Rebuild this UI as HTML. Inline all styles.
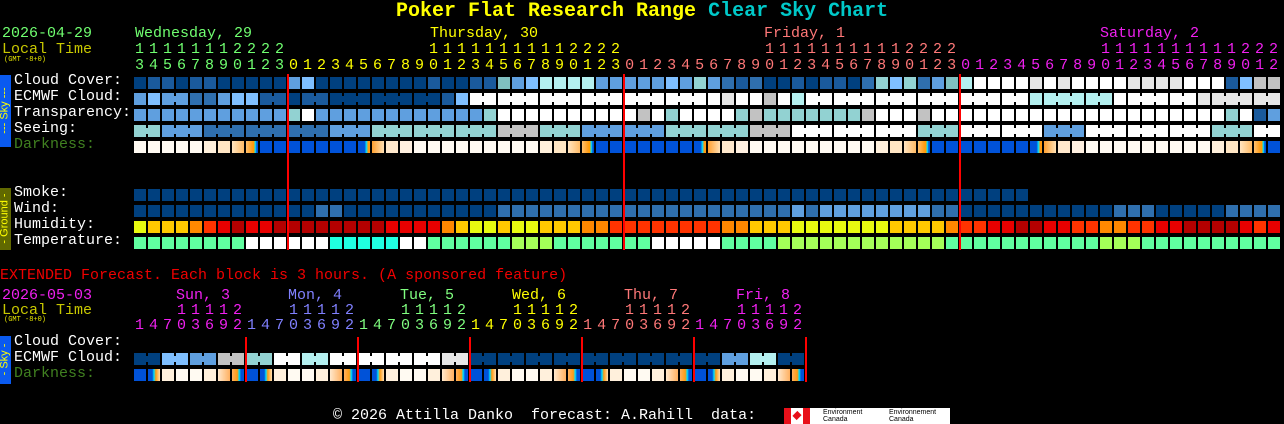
<!DOCTYPE html>
<html><head><meta charset="utf-8">
<style>
html,body{margin:0;padding:0;background:#000;}
body{width:1284px;height:424px;overflow:hidden;position:relative;font-family:"Liberation Mono",monospace;font-size:15px;line-height:15px;color:#fff;}
.t{position:absolute;white-space:pre;}
.dg{letter-spacing:5px;}
.b{position:absolute;width:12px;height:12px;}
.br{position:absolute;width:2px;height:6px;}
.red{position:absolute;width:2px;background:#f00;}
.bar{position:absolute;left:0;width:11px;}
.vt{position:absolute;left:-2px;transform:rotate(-90deg);transform-origin:center;font-family:"Liberation Sans",sans-serif;font-size:11px;line-height:11px;color:#ff0;white-space:pre;}
</style></head><body>
<div class="t" style="left:396px;top:2px;font-size:20px;line-height:20px;font-weight:bold;color:#ffff00">Poker Flat Research Range <span style="color:#00c8c8">Clear Sky Chart</span></div>

<div class="t" style="left:2px;top:26px;color:#70ff70">2026-04-29</div>
<div class="t" style="left:2px;top:42px;color:#c8c800">Local Time</div>
<div class="t" style="left:4px;top:57px;font-size:7px;line-height:7px;color:#e8e800">(GMT -8+0)</div>

<div class="t" style="left:135px;top:26px;color:#70ff70">Wednesday, 29</div>
<div class="t" style="left:430px;top:26px;color:#ffff00">Thursday, 30</div>
<div class="t" style="left:764px;top:26px;color:#ff7878">Friday, 1</div>
<div class="t" style="left:1100px;top:26px;color:#f020f0">Saturday, 2</div>

<div class="t dg" style="left:135px;top:42px;color:#70ff70">11111112222</div>
<div class="t dg" style="left:429px;top:42px;color:#ffff00">11111111112222</div>
<div class="t dg" style="left:765px;top:42px;color:#ff7878">11111111112222</div>
<div class="t dg" style="left:1101px;top:42px;color:#f020f0">11111111112222</div>

<div class="t dg" style="left:135px;top:58px"><span style="color:#70ff70">34567890123</span><span style="color:#ffff00">012345678901234567890123</span><span style="color:#ff7878">012345678901234567890123</span><span style="color:#f020f0">01234567890123456789012</span></div>

<div class="t" style="left:14px;top:73px">Cloud Cover:</div>
<div class="t" style="left:14px;top:89px">ECMWF Cloud:</div>
<div class="t" style="left:14px;top:105px">Transparency:</div>
<div class="t" style="left:14px;top:121px">Seeing:</div>
<div class="t" style="left:14px;top:137px;color:#408020">Darkness:</div>

<div class="t" style="left:14px;top:185px">Smoke:</div>
<div class="t" style="left:14px;top:201px">Wind:</div>
<div class="t" style="left:14px;top:217px">Humidity:</div>
<div class="t" style="left:14px;top:233px">Temperature:</div>

<div class="bar" style="top:75px;height:72px;background:#0a5af0"><div class="vt" style="top:30px;width:70px;left:-30px;text-align:center">--- Sky ---</div></div>
<div class="bar" style="top:188px;height:62px;background:#606800"><div class="vt" style="top:25px;width:62px;left:-26px;text-align:center">- Ground -</div></div>
<div class="bar" style="top:336px;height:48px;background:#0a5af0"><div class="vt" style="top:18px;width:48px;left:-19px;text-align:center">- Sky -</div></div>

<div class="t" style="left:0px;top:268px;color:#f00000">EXTENDED Forecast. Each block is 3 hours. (A sponsored feature)</div>
<div class="t" style="left:2px;top:288px;color:#f020f0">2026-05-03</div>
<div class="t" style="left:2px;top:303px;color:#c8c800">Local Time</div>
<div class="t" style="left:4px;top:317px;font-size:7px;line-height:7px;color:#e8e800">(GMT -8+0)</div>

<div class="t" style="left:176px;top:288px;color:#f020f0">Sun, 3</div>
<div class="t" style="left:288px;top:288px;color:#8080ff">Mon, 4</div>
<div class="t" style="left:400px;top:288px;color:#80ff80">Tue, 5</div>
<div class="t" style="left:512px;top:288px;color:#ffff00">Wed, 6</div>
<div class="t" style="left:624px;top:288px;color:#ff7878">Thu, 7</div>
<div class="t" style="left:736px;top:288px;color:#f020f0">Fri, 8</div>

<div class="t dg" style="left:177px;top:303px;color:#f020f0">11112</div>
<div class="t dg" style="left:289px;top:303px;color:#8080ff">11112</div>
<div class="t dg" style="left:401px;top:303px;color:#80ff80">11112</div>
<div class="t dg" style="left:513px;top:303px;color:#ffff00">11112</div>
<div class="t dg" style="left:625px;top:303px;color:#ff7878">11112</div>
<div class="t dg" style="left:737px;top:303px;color:#f020f0">11112</div>
<div class="t dg" style="left:135px;top:318px"><span style="color:#f020f0">14703692</span><span style="color:#8080ff">14703692</span><span style="color:#80ff80">14703692</span><span style="color:#ffff00">14703692</span><span style="color:#ff7878">14703692</span><span style="color:#f020f0">14703692</span></div>

<div class="t" style="left:14px;top:334px">Cloud Cover:</div>
<div class="t" style="left:14px;top:350px">ECMWF Cloud:</div>
<div class="t" style="left:14px;top:366px;color:#408020">Darkness:</div>

<div class="t" style="left:333px;top:408px">© 2026 Attilla Danko  forecast: A.Rahill  data:</div>
<div style="position:absolute;left:784px;top:408px;width:166px;height:16px;background:#fff">
  <div style="position:absolute;left:0;top:0;width:7px;height:16px;background:#e8101a"></div>
  <div style="position:absolute;left:19px;top:0;width:7px;height:16px;background:#e8101a"></div>
  <div style="position:absolute;left:10px;top:4px;width:6px;height:7px;background:#e8101a;transform:rotate(45deg)"></div>
  <div class="t" style="left:39px;top:1px;font-family:'Liberation Sans',sans-serif;font-size:7px;line-height:7px;color:#000">Environment<br>Canada</div>
  <div class="t" style="left:105px;top:1px;font-family:'Liberation Sans',sans-serif;font-size:7px;line-height:7px;color:#000">Environnement<br>Canada</div>
</div>

<div id="g"></div>
<script>
var P={A:'#00407f',B:'#1a5a9c',C:'#2f6fae',E:'#5f9fdf',F:'#7fbfff',G:'#92d2d2',T:'#80c0c0',H:'#b4f0f0',W:'#ffffff',l:'#e6e6e6',g:'#c2c2c2',
y:'#e8fa10',o:'#ffc800',O:'#ff8800',r:'#ff3300',R:'#e80000',X:'#b40000',m:'#60ffa0',L:'#a4ff58',t:'#20ffe0',w:'#ffffff'};
var out='';
function blk(x,y,c){out+='<div class="b" style="left:'+x+'px;top:'+y+'px;background:'+c+'"></div>';}
function brg(x,y,c){out+='<div class="br" style="left:'+x+'px;top:'+(y+3)+'px;background:'+c+'"></div>';}
function row(s,y,p,groups){
 for(var i=0;i<s.length;i++){var c=P[s[i]]||s[i];blk(134+i*14,y,c);
  if(groups&&i+1<s.length&&s[i]==s[i+1]&&((i+1-2)%3!=0)) brg(146+i*14,y,c);}
}
function rep(c,n){return Array(n+1).join(c);}
row("ABBABBAAAAA"+"EF"+"AAAAAAAA"+"BAABBTEFHHHHEEEEEFEGECBCAABABB"+"ACGFGCETHWWWWlWlWWWWllllWWWBFgg",77);
row("EFEECCEFFBB"+"ABBAAAAAAA"+"ABF"+rep("W",18)+"lWWgWHWWW"+rep("W",13)+rep("H",6)+rep("W",6)+rep("l",6),93,0,1);
row(rep("E",11)+"GW"+rep("E",8)+"EEEEG"+rep("W",10)+"gWGWWWWGgGGGGGG"+"GgWWWgWW"+rep("W",19)+"GWBE",109);
var sg=[[0,2,'G'],[2,3,'E'],[5,3,'C'],[8,3,'C'],[11,3,'C'],[14,3,'E'],[17,3,'G'],[20,3,'G'],[23,3,'G'],[26,3,'g'],[29,3,'G'],[32,3,'E'],[35,3,'E'],[38,3,'G'],[41,3,'G'],[44,3,'g'],[47,3,'W'],[50,3,'W'],[53,3,'W'],[56,3,'G'],[59,3,'W'],[62,3,'W'],[65,3,'E'],[68,3,'W'],[71,3,'W'],[74,3,'W'],[77,3,'G'],[80,2,'W']];
sg.forEach(function(q){for(var k=0;k<q[1];k++){var x=134+(q[0]+k)*14;blk(x,125,P[q[2]]);if(k<q[1]-1)brg(x+12,125,P[q[2]]);}});
// darkness main
var N='#0052d8';
function dk(d){
 if(d>=0&&d<=6)return N;
 if(d==7)return 'linear-gradient(90deg,#0052d8 55%,#00e0ff 70%,#ff9a10 85%)';
 if(d==8)return 'linear-gradient(90deg,#ffa030,#ffe0b4)';
 if(d==9)return '#ffe8cc';
 if(d==10)return '#fff0e0';
 if(d==-1)return 'linear-gradient(90deg,#ffc070,#ff9a10 55%,#ffa000 65%,#00e0ff 78%,#0052d8 90%)';
 if(d==-2)return 'linear-gradient(90deg,#ffe4c0,#ffbb66)';
 if(d==-3)return '#ffe6c4';
 if(d==-4)return '#fff0dc';
 return '#fffaf2';
}
var nights=[9,33,57,81];
for(var i=0;i<82;i++){var best=99;nights.forEach(function(n){var d=i-n;if(d>=-9&&d<=14&&Math.abs(d-3)<Math.abs(best-3))best=d;});blk(134+i*14,141,dk(best));}
row(rep("A",64),189);
row(rep("A",13)+"CC"+rep("A",11)+rep("C",21)+"EC"+rep("E",8)+"CC"+rep("A",11)+"CCC"+rep("A",5)+"CCCC",205);
row("yoooOrRXRRXXXXXXXXRRR"+"ROoyyoyyoooOOrrrrrrrrOOoooyyyy"+"yyyooooOrrRRXXRRrrOOrrRRXXXXRrR",221);
row("mmmmmmmmwwwwwwtttttww"+"mmmmmmLLLmmmmmmmwwwwwmmmmLLLLL"+rep("L",7)+rep("m",11)+"LLL"+rep("m",10),237);
// extended
var ec="AFEgGWHWWWWlAAAAAAAAAEHA";
for(var p=0;p<24;p++){var c=P[ec[p]],x=134+p*28;blk(x,353,c);blk(x+14,353,c);brg(x+12,353,c);}
var ed=[N,'linear-gradient(90deg,#0052d8 35%,#00e0ff 50%,#ff9a10 65%,#ffe0b4)','#fff0dc','#fffaf2','#fffaf2','#fff0dc','linear-gradient(90deg,#ffe8cc,#ffb060)','linear-gradient(90deg,#ffb060,#ff9a10 45%,#00e0ff 60%,#0052d8 75%)'];
for(var i=0;i<48;i++)blk(134+i*14,369,ed[i%8]);
[288,624,960].forEach(function(x){out+='<div class="red" style="left:'+(x-1)+'px;top:74px;height:176px"></div>';});
[246,358,470,582,694,806].forEach(function(x){out+='<div class="red" style="left:'+(x-1)+'px;top:337px;height:45px"></div>';});
document.getElementById('g').innerHTML=out;
</script>
</body></html>
